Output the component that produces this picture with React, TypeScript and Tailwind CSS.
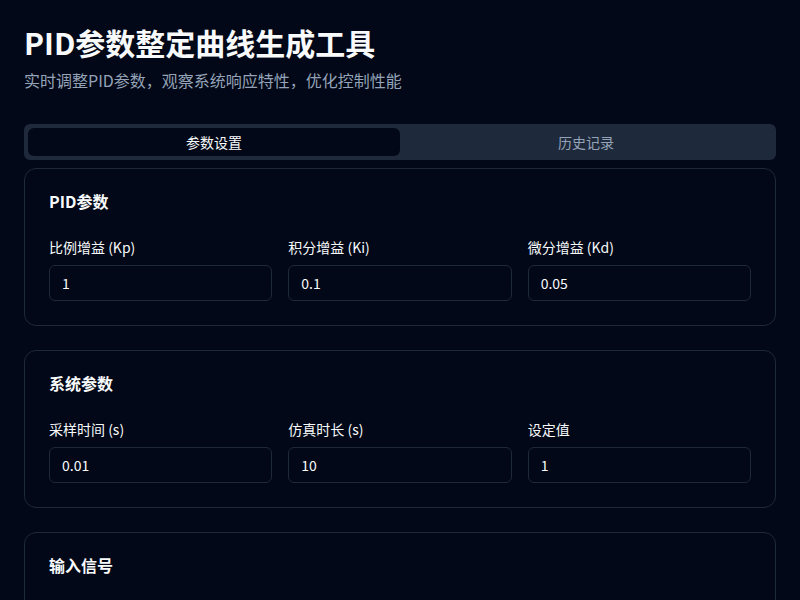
const FONT = "font-['Noto_Sans_CJK_SC','Noto_Sans',sans-serif]"

type Field = { label: string; value: string }

const PID_FIELDS: Field[] = [
  { label: '比例增益 (Kp)', value: '1' },
  { label: '积分增益 (Ki)', value: '0.1' },
  { label: '微分增益 (Kd)', value: '0.05' },
]

const SYS_FIELDS: Field[] = [
  { label: '采样时间 (s)', value: '0.01' },
  { label: '仿真时长 (s)', value: '10' },
  { label: '设定值', value: '1' },
]

const INPUT_FIELDS: Field[] = [
  { label: '信号类型', value: '阶跃信号' },
  { label: '幅值', value: '1' },
  { label: '起始时间 (s)', value: '0' },
]

function Section({ title, fields, gap = 'mt-7' }: { title: string; fields: Field[]; gap?: string }) {
  return (
    <div className="rounded-xl border border-[#1e293b] p-6">
      <div className="text-base leading-4 font-semibold text-[#f8fafc]">{title}</div>
      <div className={`${gap} grid grid-cols-3 gap-4`}>
        {fields.map(f => (
          <div key={f.label}>
            <div className="text-sm leading-5 text-[#f8fafc] mb-2">{f.label}</div>
            <div className="h-9 rounded-md border border-[#1e293b] px-3 flex items-center text-sm text-[#f8fafc]">
              {f.value}
            </div>
          </div>
        ))}
      </div>
    </div>
  )
}

export default function App() {
  return (
    <div className={`${FONT} h-[600px] overflow-hidden bg-[#020817] px-6 pt-6`}>
      <h1 className="text-3xl font-bold text-[#f8fafc]">PID参数整定曲线生成工具</h1>
      <p className="mt-2 text-base text-[#94a3b8]">实时调整PID参数，观察系统响应特性，优化控制性能</p>

      <div className="mt-8 h-9 rounded-md bg-[#1e293b] p-1 grid grid-cols-2">
        <div className="rounded-md bg-[#020817] flex items-center justify-center text-sm text-[#f8fafc]">参数设置</div>
        <div className="flex items-center justify-center text-sm text-[#94a3b8]">历史记录</div>
      </div>

      <div className="mt-2 flex flex-col gap-6">
        <Section title="PID参数" fields={PID_FIELDS} />
        <Section title="系统参数" fields={SYS_FIELDS} />
        <Section title="输入信号" fields={INPUT_FIELDS} gap="mt-9" />
      </div>
    </div>
  )
}
